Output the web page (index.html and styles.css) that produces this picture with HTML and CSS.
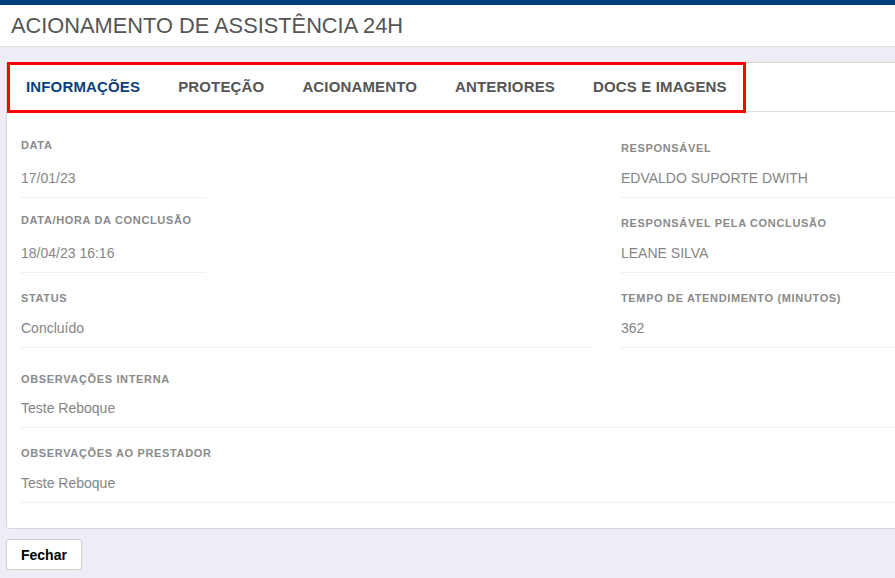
FILE: index.html
```html
<!DOCTYPE html>
<html lang="pt-BR">
<head>
<meta charset="utf-8">
<title>Acionamento de Assistência 24H</title>
<link rel="stylesheet" href="styles.css">
</head>
<body>
<header class="page-header">
  <h1 class="page-title">ACIONAMENTO DE ASSISTÊNCIA 24H</h1>
</header>
<main class="page-main">
  <section class="card">
    <nav class="tab-bar">
      <ul class="tabs">
        <li class="tab tab--active">INFORMAÇÕES</li>
        <li class="tab">PROTEÇÃO</li>
        <li class="tab">ACIONAMENTO</li>
        <li class="tab">ANTERIORES</li>
        <li class="tab">DOCS E IMAGENS</li>
      </ul>
    </nav>
    <div class="card-body">
      <div class="field field--raised field--narrow">
        <div class="field-label">Data</div>
        <div class="field-value">17/01/23</div>
      </div>
      <div class="field">
        <div class="field-label">Responsável</div>
        <div class="field-value">EDVALDO SUPORTE DWITH</div>
      </div>
      <div class="field field--raised field--narrow">
        <div class="field-label">Data/Hora da Conclusão</div>
        <div class="field-value">18/04/23 16:16</div>
      </div>
      <div class="field">
        <div class="field-label">Responsável pela Conclusão</div>
        <div class="field-value">LEANE SILVA</div>
      </div>
      <div class="field">
        <div class="field-label">Status</div>
        <div class="field-value">Concluído</div>
      </div>
      <div class="field">
        <div class="field-label">Tempo de Atendimento (Minutos)</div>
        <div class="field-value">362</div>
      </div>
      <div class="field field--wide field--obs-first">
        <div class="field-label">Observações Interna</div>
        <div class="field-value">Teste Reboque</div>
      </div>
      <div class="field field--wide field--obs">
        <div class="field-label">Observações ao Prestador</div>
        <div class="field-value">Teste Reboque</div>
      </div>
    </div>
  </section>
  <div class="actions">
    <button class="btn" type="button">Fechar</button>
  </div>
</main>
</body>
</html>
```
FILE: styles.css
```css
html, body {
  margin: 0;
  padding: 0;
  overflow: hidden;
}

body {
  background: #ededf5;
  font-family: "Liberation Sans", Arial, sans-serif;
  color: #555;
}

.page-header {
  background: #fff;
  border-top: 5px solid #00407f;
  border-bottom: 1px solid #dcdcdc;
  height: 41px;
}

.page-title {
  margin: 0;
  padding-left: 11px;
  font-size: 21.8px;
  font-weight: normal;
  line-height: 41px;
  color: #555;
  white-space: nowrap;
}

.page-main {
  padding: 15px 0 0 6px;
}

.card {
  width: 1210px;
  background: #fff;
  border: 1px solid #d8d8d8;
  border-radius: 3px;
}

.tab-bar {
  border-bottom: 1px solid #dcdcdc;
}

.tabs {
  position: relative;
  display: inline-flex;
  margin: 0;
  padding: 0;
  list-style: none;
}

.tabs::after {
  content: "";
  position: absolute;
  top: -1px;
  left: 0;
  right: 0;
  bottom: -2px;
  border: 3px solid #ff0000;
  pointer-events: none;
}

.tab {
  padding: 0 19px;
  height: 48px;
  line-height: 48px;
  font-size: 15px;
  font-weight: bold;
  letter-spacing: 0.15px;
  color: #555;
  white-space: nowrap;
}

.tab--active {
  color: #0b3f7c;
}

.card-body {
  display: grid;
  grid-template-columns: 573px 573px;
  column-gap: 27px;
  padding: 11px 14px 25px;
}

.field {
  padding: 18px 0 9px;
  border-bottom: 1px solid #efefef;
}

.field-label {
  font-size: 11px;
  line-height: 15px;
  font-weight: bold;
  letter-spacing: 0.65px;
  text-transform: uppercase;
  color: #8a8a8a;
  margin-bottom: 12px;
  white-space: nowrap;
}

.field-value {
  font-size: 14px;
  line-height: 20px;
  color: #858585;
  white-space: nowrap;
}

.field--raised {
  padding-top: 15px;
}

.field--raised .field-label {
  margin-bottom: 15px;
}

.field--narrow {
  width: 185px;
}

.field--wide {
  grid-column: 1 / span 2;
}

.field--obs-first {
  padding: 24px 0 9px;
}

.field--obs-first .field-label {
  margin-bottom: 11px;
}

.field--obs {
  padding: 18px 0 9px;
}

.field--obs .field-label {
  margin-bottom: 12px;
}

.actions {
  padding-top: 10px;
}

.btn {
  height: 31px;
  padding: 0 14px;
  background: #fff;
  border: 1px solid #cfcfcf;
  border-radius: 3px;
  font-family: "Liberation Sans", Arial, sans-serif;
  font-size: 14px;
  font-weight: bold;
  color: #000;
}
```
